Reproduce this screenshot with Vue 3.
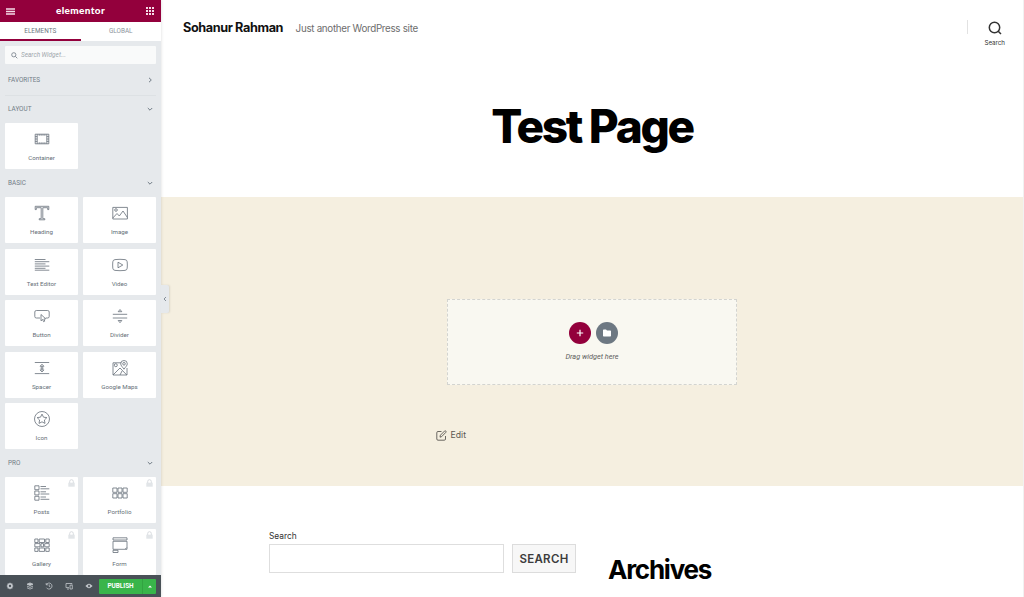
<script setup>
import { ref } from 'vue'

const activeTab = ref('Elements')
const keyword = ref('')

// widget icons, drawn on a 16 x 16 grid
const icons = {
  container: 'M1.2 3.2H14.8V12.8H1.2ZM3.2 3.2V12.8M12.8 3.2V12.8M1.2 5.6H3.2M1.2 8H3.2M1.2 10.4H3.2M12.8 5.6H14.8M12.8 8H14.8M12.8 10.4H14.8M5.2 3.2V4.8M7.1 3.2V4.8M9 3.2V4.8M10.9 3.2V4.8M5.2 12.8V11.2M7.1 12.8V11.2M9 12.8V11.2M10.9 12.8V11.2',
  heading: 'M1.2 1.3H14.8V4.6H13.7V2.7H8.8V13.7H10.8V14.8H5.2V13.7H7.2V2.7H2.3V4.6H1.2Z',
  image: 'M.8 2.4H15.4V14H.8ZM.8 13L5 8.5L7.3 11L11 6L15.4 12.5M5.3 5A1.3 1.3 0 1 1 2.7 5A1.3 1.3 0 1 1 5.3 5',
  text: 'M.8 2.5H11.5M.8 4.7H15.3M.8 6.9H11.5M.8 9.1H15.3M.8 11.3H11.5M.8 13.2H15.3',
  video: 'M3 2.6Q8 2 13 2.6Q15 2.8 15.2 4.8Q15.5 8 15.2 11.2Q15 13.2 13 13.4Q8 14 3 13.4Q1 13.2 .8 11.2Q.5 8 .8 4.8Q1 2.8 3 2.6ZM6 5.2L10.8 8L6 10.8Z',
  button: 'M6 10H2.4Q.8 10 .8 8.5V4Q.8 2.5 2.4 2.5H13.6Q15.2 2.5 15.2 4V8.5Q15.2 10 13.6 10H11.7M7 6.5V12.8L8.5 11.5L9.6 13.7L10.8 13.1L9.8 11L11.7 10.8Z',
  divider: 'M.8 6.3H15.2M.8 10H15.2M6.2 3.7L8 1.5L9.8 3.7ZM6.2 12.5L8 14.7L9.8 12.5Z',
  spacer: 'M.8 2.5H15.2M.8 13.6H15.2M6.1 6.3L8 4.2L9.9 6.3ZM6.1 9.9L8 12L9.9 9.9ZM8 6.3V9.9M6.4 8.1H9.6',
  maps: 'M9.2 2.8H1V15H15V8M1 15L8 8L14.8 15M5.3 5.2A1.5 1.5 0 1 1 2.3 5.2A1.5 1.5 0 1 1 5.3 5.2M8 15L10 11M12 9.2C10.5 7 8.7 5.5 8.7 3.8A3.3 3.3 0 0 1 15.3 3.8C15.3 5.5 13.5 7 12 9.2ZM13.3 3.8A1.3 1.3 0 1 1 10.7 3.8A1.3 1.3 0 1 1 13.3 3.8',
  star: 'M15.5 8A7.5 7.5 0 1 1 .5 8A7.5 7.5 0 1 1 15.5 8M8 3.1L9.5 6.2L12.9 6.6L10.4 9L11 12.4L8 10.8L5 12.4L5.6 9L3.1 6.6L6.5 6.2Z',
  posts: 'M.8 .8H5V4.7H.8ZM.8 6H5V9.9H.8ZM.8 11.3H5V15.2H.8ZM6.5 1.5H12M6.5 3.8H15.3M6.5 6.8H12M6.5 9H15.3M6.5 12H12M6.5 14.3H15.3',
  portfolio: 'M.8 3H5V7.3H.8ZM6 3H10V7.3H6ZM11 3H15.2V7.3H11ZM.8 8.7H5V13H.8ZM6 8.7H10V13H6ZM11 8.7H15.2V13H11Z',
  gallery: 'M.8 2H4V5.5H.8ZM5.2 2H10.5V5.5H5.2ZM11.8 2H15.2V5.5H11.8ZM.8 6.6H6V9.8H.8ZM7 6.6H9.5V9.8H7ZM10.7 6.6H15.2V9.8H10.7ZM.8 11H4V14.4H.8ZM5.2 11H10.5V14.4H5.2ZM11.8 11H15.2V14.4H11.8Z',
  form: 'M1 .8H15V3H1ZM1 4.3H15V12.3H1ZM1 13.3H6V15.5H1ZM13.3 12L14.8 10.5',
}

const sections = [
  { title: 'Layout', widgets: [{ name: 'Container', icon: 'container' }] },
  {
    title: 'Basic',
    widgets: [
      { name: 'Heading', icon: 'heading' },
      { name: 'Image', icon: 'image' },
      { name: 'Text Editor', icon: 'text' },
      { name: 'Video', icon: 'video' },
      { name: 'Button', icon: 'button' },
      { name: 'Divider', icon: 'divider' },
      { name: 'Spacer', icon: 'spacer' },
      { name: 'Google Maps', icon: 'maps' },
      { name: 'Icon', icon: 'star' },
    ],
  },
  {
    title: 'Pro',
    locked: true,
    widgets: [
      { name: 'Posts', icon: 'posts' },
      { name: 'Portfolio', icon: 'portfolio' },
      { name: 'Gallery', icon: 'gallery' },
      { name: 'Form', icon: 'form' },
    ],
  },
]
</script>

<template>
  <div class="editor">
    <aside class="panel">
      <header class="panel__header">
        <svg class="panel__menu" viewBox="0 0 9 7"><path d="M0 1H9M0 3.5H9M0 6H9" /></svg>
        <span class="panel__logo">elementor</span>
        <svg class="panel__apps" viewBox="0 0 8 8"><path d="M0 1H8M0 4H8M0 7H8" /></svg>
      </header>

      <nav class="tabs">
        <button
          v-for="tab in ['Elements', 'Global']"
          :key="tab"
          class="tabs__item"
          :class="{ active: activeTab === tab }"
          @click="activeTab = tab"
        >{{ tab }}</button>
      </nav>

      <div class="panel__body">
        <label class="search">
          <svg viewBox="0 0 8 8"><circle cx="3.2" cy="3.2" r="2.4" /><path d="M5 5L7.2 7.2" /></svg>
          <input v-model="keyword" placeholder="Search Widget..." />
        </label>

        <div class="section__title section__title--favorites">
          <span>Favorites</span>
          <svg viewBox="0 0 6 6"><path d="M2 .8L4.3 3L2 5.2" /></svg>
        </div>

        <section v-for="section in sections" :key="section.title" class="section">
          <div class="section__title">
            <span>{{ section.title }}</span>
            <svg viewBox="0 0 6 6"><path d="M.8 2L3 4.2L5.2 2" /></svg>
          </div>
          <div class="widgets">
            <div v-for="widget in section.widgets" :key="widget.name" class="widget">
              <svg class="widget__icon" viewBox="0 0 16 16"><path :d="icons[widget.icon]" /></svg>
              <span>{{ widget.name }}</span>
              <svg v-if="section.locked" class="widget__lock" viewBox="0 0 7 8">
                <path d="M1.7 4V2.5A1.8 1.8 0 0 1 5.3 2.5V4" />
                <rect x=".3" y="3.7" width="6.4" height="4" />
              </svg>
            </div>
          </div>
        </section>
      </div>

      <footer class="panel__footer">
        <div class="tools">
          <!-- settings -->
          <svg viewBox="0 0 8 8"><circle cx="4" cy="4" r="1.9" stroke-width="1.5" /><path stroke-width="1.1" d="M4 .8V2M4 6V7.2M.8 4H2M6 4H7.2M1.7 1.7L2.5 2.5M5.5 5.5L6.3 6.3M6.3 1.7L5.5 2.5M2.5 5.5L1.7 6.3" /></svg>
          <!-- navigator -->
          <svg viewBox="0 0 8 8"><path fill="currentColor" d="M1 2.2L4 .9L7 2.2L4 3.5Z" /><path d="M1 4.1L4 5.4L7 4.1M1 5.8L4 7.1L7 5.8" /></svg>
          <!-- history -->
          <svg viewBox="0 0 8 8"><path d="M1.2 1V2.8H3M1.4 2.6A3 3 0 1 1 1.5 5.7M4.2 2.4V4.3L5.4 5" /></svg>
          <!-- responsive -->
          <svg viewBox="0 0 8 8"><path d="M4 5.6H1V1.5H7V2.5M2 7H4M5 3.2H7.3V7H5Z" /></svg>
          <!-- preview -->
          <svg viewBox="0 0 8 8"><path fill="currentColor" d="M.8 4Q4 .4 7.2 4Q4 7.6 .8 4Z" /><circle class="pupil" cx="4" cy="4" r="1.1" /></svg>
        </div>
        <button class="publish">Publish</button>
        <button class="publish-more"><svg viewBox="0 0 4 3"><path d="M0 2.6L2 .4L4 2.6Z" /></svg></button>
      </footer>

      <button class="panel__toggle">
        <svg viewBox="0 0 4 6"><path d="M3 1L1 3L3 5" /></svg>
      </button>
    </aside>

    <main class="page">
      <header class="site-header">
        <h2 class="site-title">Sohanur Rahman</h2>
        <p class="site-tagline">Just another WordPress site</p>
        <div class="site-search">
          <svg viewBox="0 0 14 14"><circle cx="6.5" cy="6.5" r="5.2" /><path d="M10 10L13 13" /></svg>
          <span>Search</span>
        </div>
      </header>

      <h1 class="page-title">Test Page</h1>

      <div class="content">
        <div class="dropzone">
          <div class="dropzone__actions">
            <button class="round round--add"><svg viewBox="0 0 8 8"><path d="M4 .8V7.2M.8 4H7.2" /></svg></button>
            <button class="round round--library"><svg viewBox="0 0 8 8"><path d="M0 1.2Q0 .5 .7 .5H3L4 1.6H7.3Q8 1.6 8 2.3V6.8Q8 7.5 7.3 7.5H.7Q0 7.5 0 6.8Z" /></svg></button>
          </div>
          <p class="dropzone__hint">Drag widget here</p>
        </div>
        <a class="edit">
          <svg viewBox="0 0 11 11"><path d="M5.5 1.5H2Q.8 1.5 .8 2.7V9Q.8 10.2 2 10.2H8.3Q9.5 10.2 9.5 9V6M4 7.2L4.4 5.2L8.7 .9Q9.2 .5 9.8 1.1Q10.4 1.7 9.9 2.3L5.7 6.6Z" /></svg>
          <span>Edit</span>
        </a>
      </div>

      <footer class="footer-widgets">
        <form class="search-form" @submit.prevent>
          <label for="site-search">Search</label>
          <div class="search-form__row">
            <input id="site-search" type="text" />
            <button>Search</button>
          </div>
        </form>
        <h2 class="archives">Archives</h2>
      </footer>
    </main>
  </div>
</template>

<style>
body {
  overflow: hidden;
  background: #fff;
}
</style>

<style scoped>
* {
  box-sizing: border-box;
}

.editor {
  display: flex;
  height: 597px;
  font-family: Roboto, 'Liberation Sans', sans-serif;
}

button {
  margin: 0;
  padding: 0;
  border: none;
  font-family: inherit;
}

svg {
  display: block;
  fill: none;
  stroke: currentColor;
}

/* left panel */
.panel {
  position: relative;
  display: flex;
  flex-direction: column;
  flex: none;
  width: 161px;
  background: #e6e9ec;
  box-shadow: 0 0 3px rgba(0, 0, 0, 0.15);
  z-index: 1;
}

.panel__header {
  display: flex;
  align-items: center;
  justify-content: space-between;
  flex: none;
  height: 22px;
  padding: 0 7px 0 6px;
  color: #f5dce7;
  background: #93003c;
}

.panel__menu { width: 9px; height: 7px; stroke-width: 1.3; }

.panel__apps {
  width: 8px;
  height: 8px;
  stroke-width: 2;
  stroke-dasharray: 2 1;
}

.panel__logo {
  font-family: Lato, sans-serif;
  font-size: 10px;
  font-weight: 900;
  letter-spacing: 0.35px;
  line-height: 20px;
  padding-bottom: 2px;
  color: #fff;
}

.tabs {
  display: flex;
  flex: none;
  height: 19px;
  background: #fff;
}

.tabs__item {
  flex: 1;
  padding-top: 1px;
  border-bottom: 2px solid transparent;
  background: transparent;
  color: #8b949c;
  font-size: 6.4px;
  text-transform: uppercase;
}

.tabs__item.active {
  border-color: #93003c;
  color: #6d7882;
}

.panel__body {
  flex: 1;
  min-height: 0;
  padding: 5px 5px 0;
  overflow: hidden;
}

.search {
  display: flex;
  align-items: center;
  gap: 3px;
  height: 18px;
  padding-left: 6px;
  border-radius: 1px;
  background: #f9fafa;
  color: #7a848d;
}

.search svg { width: 7px; height: 7px; }

.search input {
  width: 120px;
  padding: 0;
  border: none;
  outline: none;
  background: transparent;
  font: italic 6.4px Roboto, sans-serif;
}

.search input::placeholder { color: #a0a7ad; }

.section__title {
  display: flex;
  align-items: center;
  justify-content: space-between;
  height: 28px;
  padding: 0 3px;
  color: #717c86;
  font-size: 6.4px;
  text-transform: uppercase;
}

.section__title svg { width: 6px; height: 6px; }

.section__title--favorites {
  height: 32px;
  padding-top: 1px;
  border-bottom: 1px solid #dde1e4;
}

.section:first-of-type .section__title { height: 27px; padding-bottom: 2px; }

.widgets {
  display: grid;
  grid-template-columns: 1fr 1fr;
  grid-auto-rows: 46px;
  gap: 5.5px 5px;
}

.widget {
  position: relative;
  display: flex;
  flex-direction: column;
  align-items: center;
  padding-top: 8px;
  border-radius: 1px;
  background: #fff;
  color: #666f78;
  font-size: 6.2px;
}

.widget span { margin-top: 7px; line-height: 8px; }

.widget__icon { width: 16px; height: 16px; stroke-width: 0.8; }

.widget__lock {
  position: absolute;
  top: 2px;
  right: 3px;
  width: 7px;
  height: 8px;
  color: #d8dbdf;
}

.widget__lock rect { fill: #e2e5e8; stroke: none; }

.panel__footer {
  display: flex;
  align-items: center;
  flex: none;
  height: 22px;
  padding-right: 5px;
  background: #495157;
}

.tools {
  display: flex;
  flex: 1;
  justify-content: space-around;
  color: #c3c8cc;
}

.tools svg { width: 8px; height: 8px; stroke-width: 0.8; }

.pupil { fill: #495157; stroke: none; }

.publish,
.publish-more {
  height: 15px;
  background: #39b54a;
  color: #fff;
}

.publish {
  width: 43px;
  border-radius: 1px 0 0 1px;
  font-size: 6.4px;
  font-weight: 700;
  text-transform: uppercase;
}

.publish-more {
  display: grid;
  place-items: center;
  width: 14px;
  border-left: 1px solid #32a342;
  border-radius: 0 1px 1px 0;
}

.publish-more svg { width: 4px; height: 3px; fill: #fff; stroke: none; }

/* handle that sticks out over the page */
.panel__toggle {
  position: absolute;
  top: 285px;
  left: 161px;
  display: grid;
  place-items: center;
  width: 8px;
  height: 28px;
  border-radius: 0 2px 2px 0;
  background: #e6e9ec;
  color: #7b858e;
  box-shadow: 1px 0 2px rgba(0, 0, 0, 0.1);
}

.panel__toggle svg { width: 4px; height: 6px; stroke-width: 0.9; }

/* site preview */
.page {
  flex: 1;
  min-width: 0;
  height: 597px;
  overflow: hidden;
  background: #fff;
  border-right: 1px solid #f1f1f1;
  font-family: Inter, sans-serif;
}

.site-header {
  display: flex;
  align-items: center;
  height: 56px;
  padding: 0 18px 2px 22px;
}

.site-title {
  margin: 0;
  color: #111;
  font-size: 12.7px;
  font-weight: 700;
  letter-spacing: -0.4px;
}

.site-tagline {
  flex: 1;
  margin: 2px 0 0 12.5px;
  color: #6d6d6d;
  font-size: 9.8px;
  letter-spacing: -0.3px;
}

.site-search {
  display: flex;
  flex-direction: column;
  align-items: flex-end;
  width: 38px;
  margin-top: 11px;
  color: #333;
  font-size: 6.2px;
  background: linear-gradient(#e2e2e2, #e2e2e2) 0 0 / 1px 14px no-repeat;
}

.site-search svg { width: 14px; height: 14px; margin: 1px 3px 4px 0; stroke-width: 1.5; }

.page-title {
  height: 141px;
  margin: 0;
  color: #000;
  font-size: 46px;
  font-weight: 800;
  letter-spacing: -2.3px;
  line-height: 141px;
  text-align: center;
}

.content {
  height: 289px;
  padding-top: 102px;
  background: #f5efe0;
}

.dropzone {
  display: flex;
  flex-direction: column;
  align-items: center;
  width: 290px;
  height: 86px;
  margin: 0 auto;
  padding-top: 22px;
  border: 1px dashed #d3d4d0;
  background: #f9f8f1;
}

.dropzone__actions { display: flex; gap: 5px; padding-left: 2px; }

.round {
  display: grid;
  place-items: center;
  width: 22px;
  height: 22px;
  border-radius: 50%;
  color: #fff;
}

.round svg { width: 8px; height: 8px; }
.round--add { background: #93003c; }
.round--add svg { stroke-width: 1.2; }
.round--library { background: #6d7882; }
.round--library svg { fill: #fff; stroke: none; }

.dropzone__hint {
  margin: 8px 0 0;
  color: #606060;
  font: italic 7.3px/10px Roboto, sans-serif;
}

.edit {
  display: flex;
  align-items: center;
  gap: 4px;
  margin: 45px 0 0 274.5px;
  color: #5b5852;
  font-size: 8.7px;
  line-height: 11px;
}

.edit svg { width: 11px; height: 11px; stroke-width: 0.9; }

.footer-widgets {
  display: flex;
  padding: 43px 0 0 108px;
}

.search-form { width: 339px; }

.search-form label {
  display: block;
  color: #333;
  font-size: 8.4px;
  line-height: 14px;
}

.search-form__row { display: flex; gap: 8px; margin-top: 1px; }

.search-form input {
  width: 235px;
  height: 29px;
  border: 1px solid #dedede;
  background: #fff;
}

.search-form button {
  width: 64px;
  height: 29px;
  border: 1px solid #dcdcdc;
  background: #f7f7f7;
  color: #3c3c3c;
  font-size: 11.5px;
  font-weight: 600;
  letter-spacing: 0.3px;
  text-transform: uppercase;
}

.archives {
  margin: 25px 0 0;
  color: #000;
  font-size: 26px;
  font-weight: 700;
  letter-spacing: -1.25px;
  line-height: 32px;
}
</style>
